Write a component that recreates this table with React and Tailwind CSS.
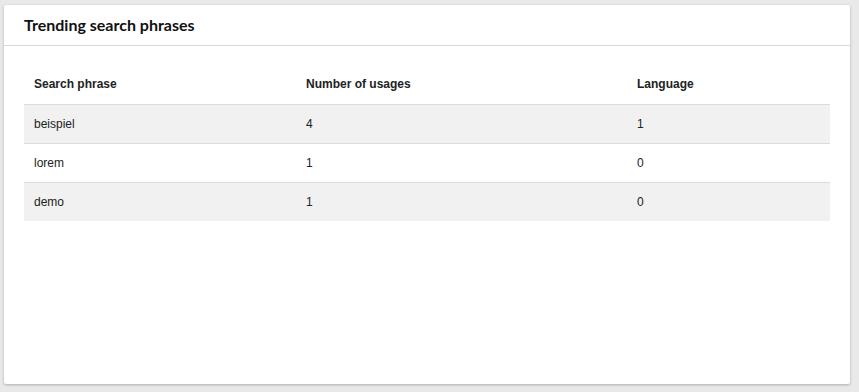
const rows = [
  { phrase: "beispiel", usages: 4, language: 1 },
  { phrase: "lorem", usages: 1, language: 0 },
  { phrase: "demo", usages: 1, language: 0 },
];

export default function App() {
  return (
    <div className="h-[392px] w-[859px] bg-[#e9e9e9] pt-[5px] pl-[4px]">
      <div className="h-[379px] w-[846px] rounded-[2px] bg-white shadow-[0_1px_3px_rgba(0,0,0,0.25)]">
        <div className="flex h-[41px] items-center border-b border-[#d9d9d9] px-[20px]">
          <h2 className="font-['Lato',sans-serif] text-[16px] font-bold text-[#111]">
            Trending search phrases
          </h2>
        </div>
        <div className="px-[20px] pt-[19px]">
          <table className="w-full border-collapse font-['Liberation_Sans',Arial,sans-serif] text-[12px] text-[#222]">
            <thead>
              <tr className="h-[39px] border-b border-[#dcdcdc]">
                <th className="w-[272px] px-[10px] text-left font-bold">Search phrase</th>
                <th className="w-[331px] px-[10px] text-left font-bold">Number of usages</th>
                <th className="px-[10px] text-left font-bold">Language</th>
              </tr>
            </thead>
            <tbody>
              {rows.map((r, i) => (
                <tr
                  key={r.phrase}
                  className={
                    "h-[39px] " +
                    (i % 2 === 0 ? "bg-[#f1f1f1] " : "bg-white ") +
                    (i < rows.length - 1 ? "border-b border-[#dcdcdc]" : "")
                  }
                >
                  <td className="px-[10px] pt-[1px]">{r.phrase}</td>
                  <td className="px-[10px] pt-[1px]">{r.usages}</td>
                  <td className="px-[10px] pt-[1px]">{r.language}</td>
                </tr>
              ))}
            </tbody>
          </table>
        </div>
      </div>
    </div>
  );
}
